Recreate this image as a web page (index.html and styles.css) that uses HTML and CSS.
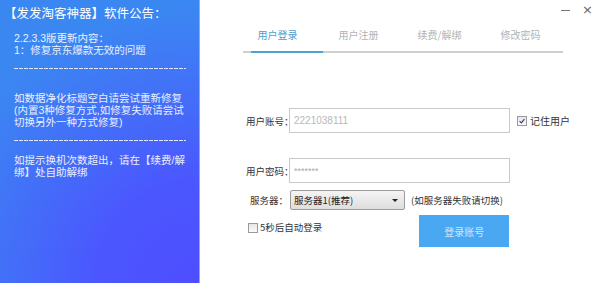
FILE: index.html
```html
<!DOCTYPE html>
<html lang="zh-CN">
<head>
<meta charset="utf-8">
<link rel="stylesheet" href="styles.css">
</head>
<body>
<div class="app">
  <aside class="notice">
    <h1 class="notice-title">【发发淘客神器】软件公告：</h1>
    <div class="notice-block">
      <p>2.2.3.3版更新内容：</p>
      <p>1：修复京东爆款无效的问题</p>
    </div>
    <div class="dash"></div>
    <div class="notice-block block-2">
      <p>如数据净化标题空白请尝试重新修复</p>
      <p>(内置3种修复方式,如修复失败请尝试</p>
      <p>切换另外一种方式修复)</p>
    </div>
    <div class="dash"></div>
    <div class="notice-block block-3">
      <p>如提示换机次数超出，请在【续费/解</p>
      <p>绑】处自助解绑</p>
    </div>
  </aside>
  <main class="login">
    <div class="titlebar">
      <span class="ctl ctl-min"></span>
      <span class="ctl ctl-close">×</span>
    </div>
    <nav class="tabs">
      <span class="tab active">用户登录</span>
      <span class="tab">用户注册</span>
      <span class="tab">续费/解绑</span>
      <span class="tab">修改密码</span>
    </nav>
    <div class="track"><div class="indicator"></div></div>
    <form class="form">
      <div class="row row-account">
        <label class="label">用户账号：</label>
        <div class="input"><span class="ph">2221038111</span></div>
        <span class="check checked"><svg viewBox="0 0 10 10" width="10" height="10"><path d="M2 5.2 L4.2 7.4 L8 2.6" fill="none" stroke="#2b3f8a" stroke-width="1.4"/></svg></span>
        <span class="check-label">记住用户</span>
      </div>
      <div class="row row-pass">
        <label class="label">用户密码：</label>
        <div class="input"><span class="ph stars">*******</span></div>
      </div>
      <div class="row row-server">
        <label class="label label-server">服务器：</label>
        <div class="select"><span>服务器1(推荐)</span><span class="caret"></span></div>
        <span class="hint">(如服务器失败请切换)</span>
      </div>
      <div class="row row-auto">
        <span class="check"></span>
        <span class="auto-label">5秒后自动登录</span>
        <button type="button" class="btn">登录账号</button>
      </div>
    </form>
  </main>
</div>
</body>
</html>
```

FILE: styles.css
```css
* { box-sizing: border-box; }
html, body { margin: 0; padding: 0; }
body {
  width: 600px;
  height: 283px;
  overflow: hidden;
  background: #fff;
  font-family: "Noto Sans CJK SC", "Noto Sans", sans-serif;
}
.app {
  display: flex;
  width: 600px;
  height: 283px;
}
.notice {
  width: 200px;
  flex: none;
  color: #fff;
  background:
    radial-gradient(circle at 100% 100%, #4e4eff 0, #4b57fe 30%, rgba(60,134,245,0) 80%),
    #3b87f2;
  padding: 4px 0 0 4px;
  border-right: 1px solid #7fb0f5;
}
.notice-title {
  margin: 0;
  font-size: 12.5px;
  font-weight: 400;
  line-height: 17px;
  white-space: nowrap;
}
.notice-block {
  margin-top: 11px;
  padding-left: 10px;
  font-family: "Liberation Sans", "Noto Sans CJK SC", sans-serif;
  font-size: 10.5px;
  line-height: 12px;
  color: #eaf0ff;
}
.notice-block p { margin: 0; white-space: nowrap; }
.block-2 { margin-top: 23px; }
.block-3 { margin-top: 13px; }
.dash {
  margin: 11px 0 0 10px;
  width: 172px;
  height: 1px;
  background: repeating-linear-gradient(90deg, #e2eaff 0 4px, transparent 4px 5px);
}
.notice-block + .dash { margin-top: 12px; }

.login {
  flex: 1;
  display: flex;
  flex-direction: column;
}
.titlebar {
  height: 20px;
  display: flex;
  justify-content: flex-end;
  align-items: center;
  gap: 12px;
  padding: 0 7px 0 0;
  color: #666;
}
.ctl-min {
  width: 9px;
  height: 1px;
  background: #777;
}
.ctl-close {
  font-size: 13px;
  line-height: 14px;
  font-family: "DejaVu Sans", sans-serif;
  color: #666;
}
.tabs {
  display: flex;
  margin: 6px 0 0 37px;
  height: 18px;
  align-items: center;
}
.tab {
  width: 81px;
  text-align: center;
  font-size: 10px;
  color: #b3b3b3;
  line-height: 18px;
}
.tab.active { color: #4d9fcc; }
.track {
  margin: 7px 0 0 43px;
  width: 320px;
  height: 2px;
  background: #cfcfcf;
  padding-left: 8px;
}
.indicator {
  width: 72px;
  height: 2px;
  background: #4aa4cf;
}
.form {
  margin: 55px 0 0 46px;
  display: flex;
  flex-direction: column;
}
.row {
  display: flex;
  align-items: center;
}
.label {
  width: 43px;
  font-size: 9.5px;
  color: #333;
  white-space: nowrap;
}
.input {
  width: 221px;
  height: 25px;
  border: 1px solid #c9c9c9;
  padding-left: 4px;
  display: flex;
  align-items: center;
}
.ph {
  font-family: "Liberation Sans", sans-serif;
  font-size: 10px;
  color: #b8b8b8;
}
.ph.stars { font-size: 9px; color: #aaa; }
.check {
  width: 10px;
  height: 10px;
  border: 1px solid #9a9a9a;
  background: linear-gradient(#e6e6e6, #fafafa);
  display: inline-flex;
  align-items: center;
  justify-content: center;
  flex: none;
}
.check svg { display: block; width: 8px; height: 8px; }
.row-account .check { margin-left: 7px; }
.check-label {
  margin-left: 3px;
  font-size: 10px;
  color: #333;
}
.row-pass { margin-top: 25px; }
.row-server { margin-top: 7px; }
.label-server { padding-left: 4px; }
.select {
  width: 115px;
  height: 20px;
  border: 1px solid #9c9c9c;
  border-radius: 2px;
  background: linear-gradient(#f4f4f4, #dedede);
  display: flex;
  align-items: center;
  justify-content: space-between;
  padding: 0 6px 0 3px;
  font-size: 9.5px;
  color: #222;
  margin-left: 1px;
}
.caret {
  width: 0; height: 0;
  border-left: 3px solid transparent;
  border-right: 3px solid transparent;
  border-top: 3px solid #222;
}
.hint {
  margin-left: 6px;
  font-size: 9.5px;
  color: #333;
}
.row-auto {
  margin-top: 5px;
  align-items: flex-start;
}
.row-auto .check { margin: 8px 0 0 2px; }
.auto-label {
  margin: 5px 0 0 2px;
  font-size: 9.5px;
  color: #333;
}
.btn {
  margin-left: 97px;
  width: 90px;
  height: 32px;
  border: 0;
  background: #4aa8f2;
  color: #cfe6ff;
  font-family: "Noto Sans CJK SC", sans-serif;
  font-size: 10px;
  padding: 0;
}
```
